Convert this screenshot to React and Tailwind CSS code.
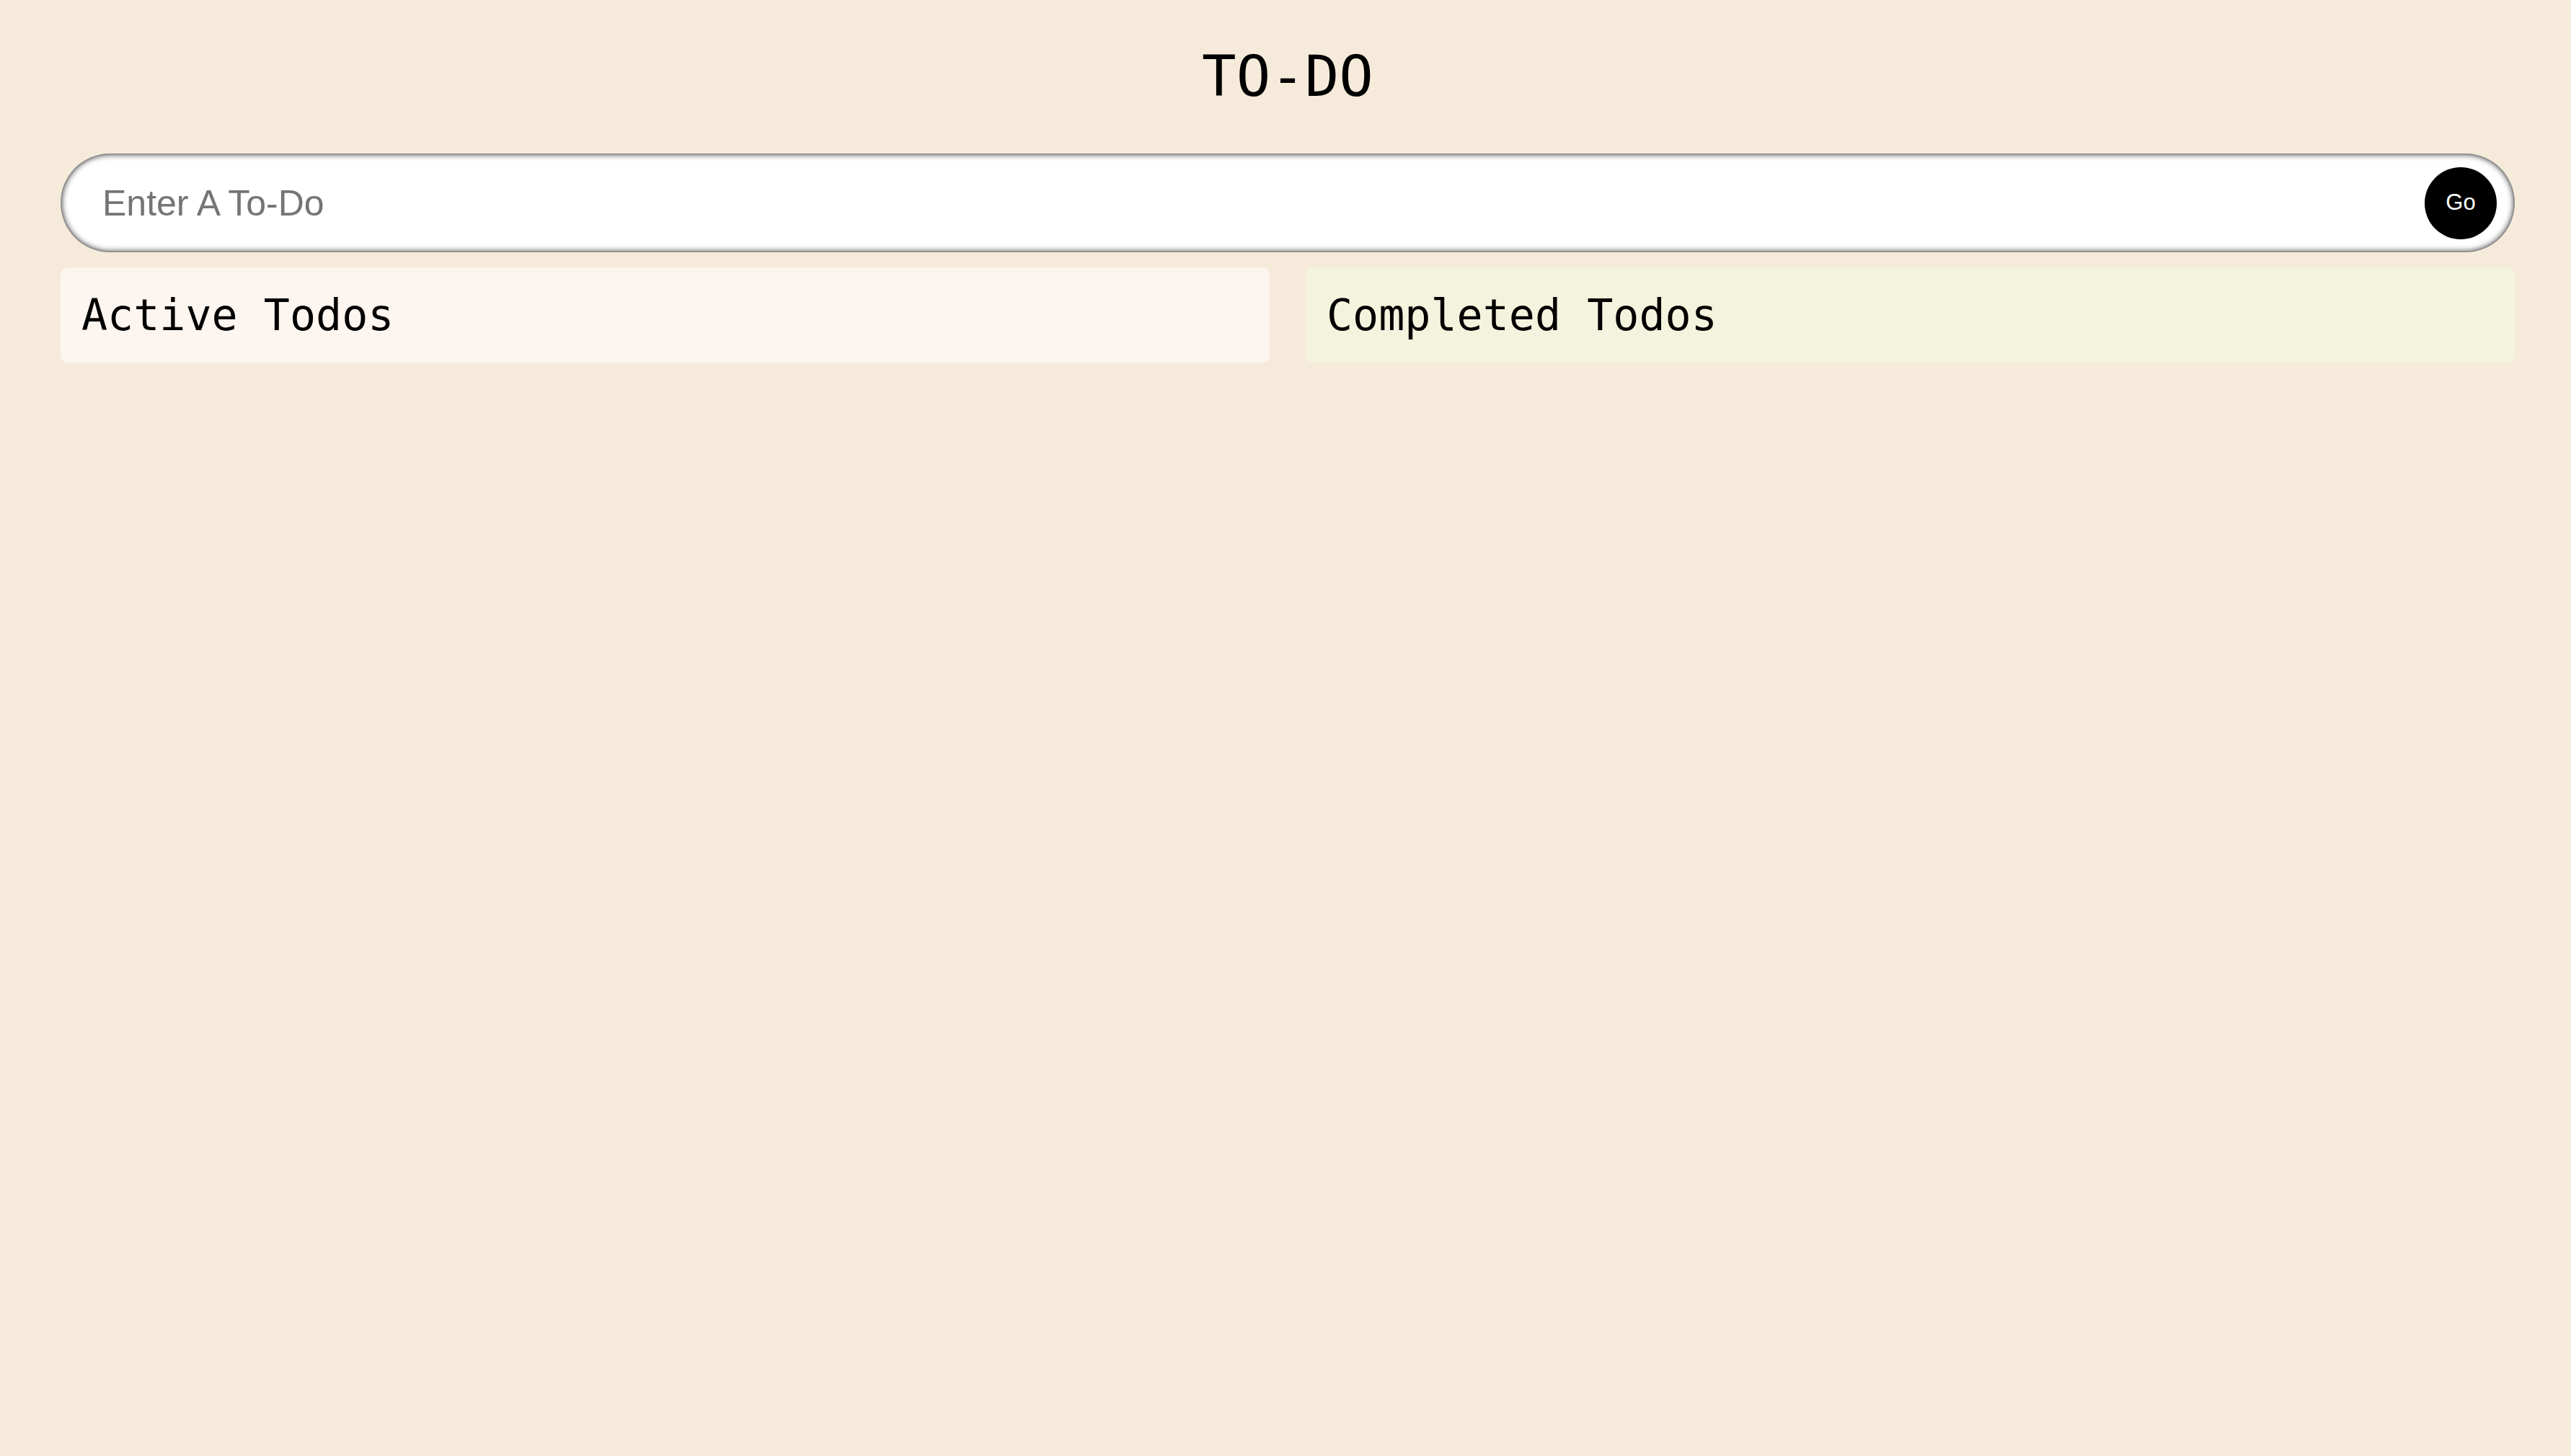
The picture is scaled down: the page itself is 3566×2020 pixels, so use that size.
import React, { useState } from "react";

function TodoColumn({ title, className }) {
  return (
    <div className={`rounded-[10px] px-[29px] py-[36px] ${className}`}>
      <h2 className="text-[60px] leading-none text-black font-['DejaVu_Sans_Mono',monospace]">
        {title}
      </h2>
    </div>
  );
}

export default function App() {
  const [text, setText] = useState("");

  return (
    <div className="min-h-screen w-full bg-[#f6ebda] pl-[84px] pr-[78px]">
      <h1 className="pt-[67px] text-center text-[79px] leading-none text-black font-['DejaVu_Sans_Mono',monospace]">
        TO-DO
      </h1>

      {/* input bar */}
      <div className="mt-[67px] flex h-[137px] items-center rounded-full bg-white pl-[58px] pr-[25px] shadow-[inset_0_0_10px_#000]">
        <input
          value={text}
          onChange={(e) => setText(e.target.value)}
          placeholder="Enter A To-Do"
          className="h-full flex-1 bg-transparent text-[50px] text-black outline-none placeholder:text-[#757575] font-['Liberation_Sans',Arial,sans-serif]"
        />
        <button className="flex h-[100px] w-[100px] items-center justify-center rounded-full bg-black text-[31px] text-white font-['Liberation_Sans',Arial,sans-serif]">
          Go
        </button>
      </div>

      <div className="mt-[21px] grid grid-cols-2 gap-[50px]">
        <TodoColumn title="Active Todos" className="bg-[#fdf5ef]" />
        <TodoColumn title="Completed Todos" className="bg-[#f4f3dd]" />
      </div>
    </div>
  );
}
